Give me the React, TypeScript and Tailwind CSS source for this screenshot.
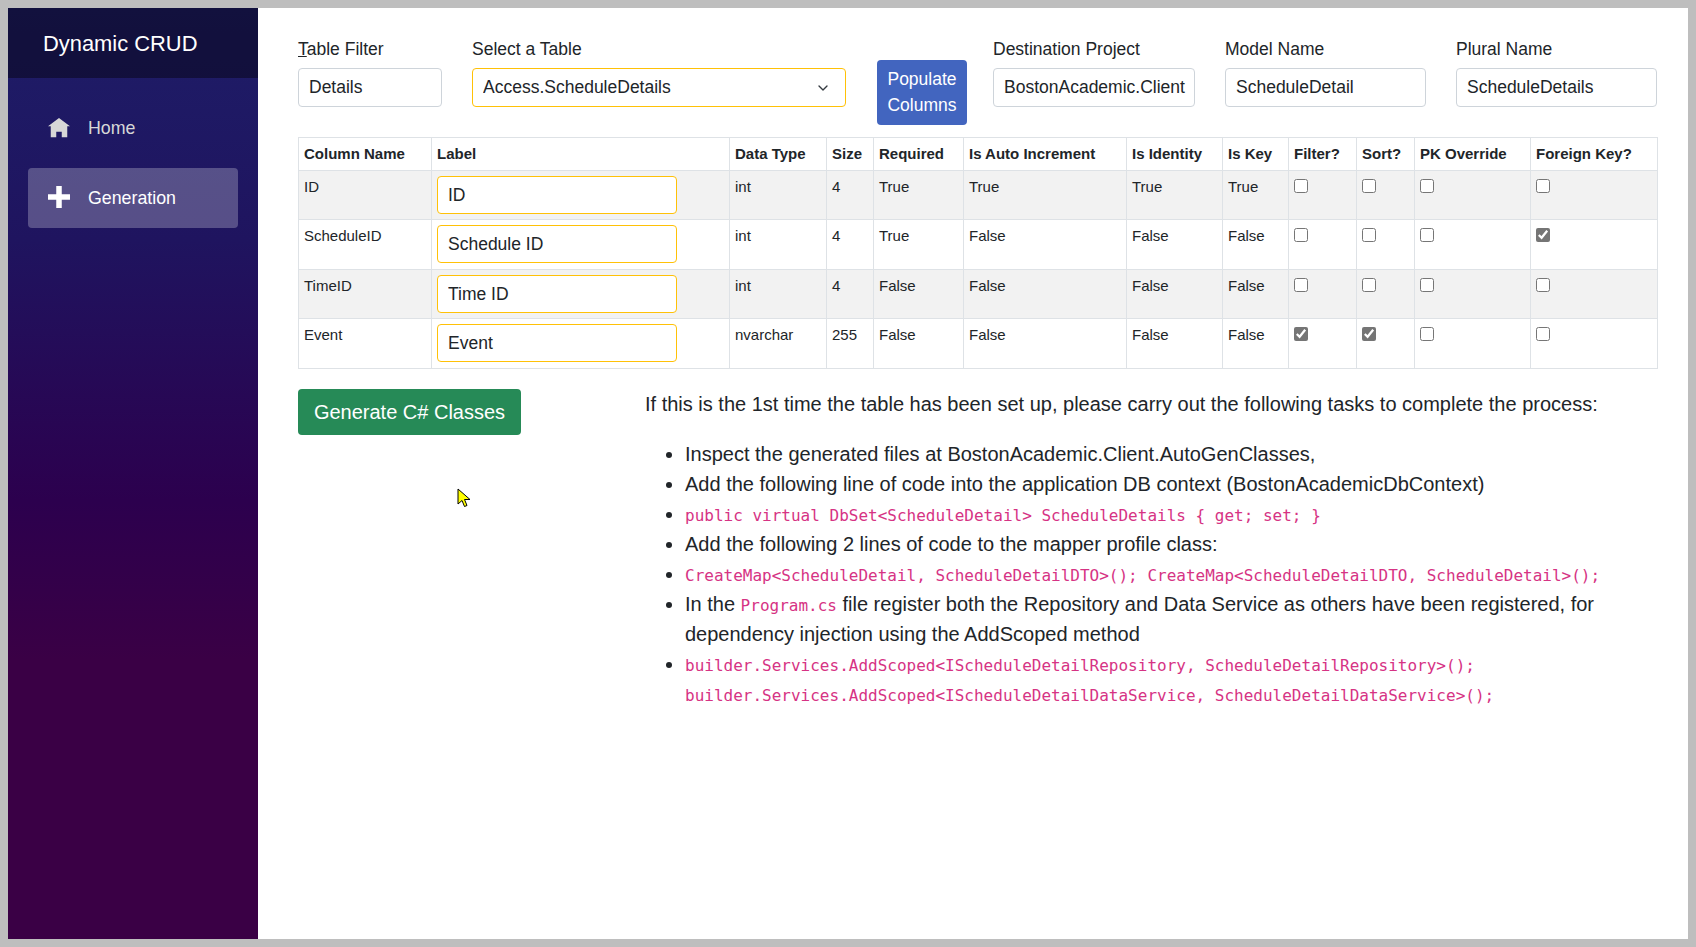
import { ChevronDown } from "lucide-react";

const FONT = "font-['Liberation_Sans',Arial,sans-serif]";
const MONO = "font-['DejaVu_Sans_Mono',monospace]";

const COLUMN_WIDTHS = [133, 298, 97, 47, 90, 163, 96, 66, 68, 58, 116, 127];
const HEADERS = [
  "Column Name",
  "Label",
  "Data Type",
  "Size",
  "Required",
  "Is Auto Increment",
  "Is Identity",
  "Is Key",
  "Filter?",
  "Sort?",
  "PK Override",
  "Foreign Key?",
];

const ROWS = [
  { name: "ID", label: "ID", type: "int", size: "4", required: "True", auto: "True", identity: "True", key: "True", checks: [false, false, false, false] },
  { name: "ScheduleID", label: "Schedule ID", type: "int", size: "4", required: "True", auto: "False", identity: "False", key: "False", checks: [false, false, false, true] },
  { name: "TimeID", label: "Time ID", type: "int", size: "4", required: "False", auto: "False", identity: "False", key: "False", checks: [false, false, false, false] },
  { name: "Event", label: "Event", type: "nvarchar", size: "255", required: "False", auto: "False", identity: "False", key: "False", checks: [true, true, false, false] },
];

function Field({ label, value, className }: { label: string; value: string; className: string }) {
  return (
    <div className={className}>
      <label className="mb-[9px] block h-[20px] text-[17.5px] leading-[20px] text-[#212529]">{label}</label>
      <input
        readOnly
        value={value}
        className="h-[39px] w-full rounded-[4px] border border-[#ced4da] bg-white pl-[10px] pr-[4px] text-[17.5px] text-[#212529] outline-none"
      />
    </div>
  );
}

function Cell({ children }: { children: React.ReactNode }) {
  return <td className="border border-[#dee2e6] px-[5px] pb-[5px] pt-[6px] align-top text-[15px] leading-[20px] text-[#212529]">{children}</td>;
}

function Code({ children }: { children: React.ReactNode }) {
  return <code className={`${MONO} text-[16px] leading-none text-[#d63384]`}>{children}</code>;
}

export default function App() {
  return (
    <div className={`${FONT} relative flex h-[947px] w-[1696px] overflow-hidden bg-[#bebebe] p-2`}>
      <aside className="flex w-[250px] shrink-0 flex-col bg-[linear-gradient(180deg,#1e1d68_0%,#1f145f_25%,#2c004e_53%,#3a0045_70%)]">
        <div className="flex h-[70px] items-center bg-black/40 pl-[35px] pt-[2px] text-[21.9px] text-white">Dynamic CRUD</div>
        <nav className="flex flex-col gap-[10px] px-5 pt-[20px]">
          <a className="flex h-[60px] items-center gap-[18px] rounded-[4px] px-[20px] pt-[1px] text-[17.8px] text-[#d7d7d7]">
            <svg width="22" height="22" viewBox="0 0 8 8" fill="currentColor">
              <path d="M4 0 0 3h1v4h2V5h2v2h2V3.03L8 3 4 0z" />
            </svg>
            Home
          </a>
          <a className="flex h-[60px] items-center gap-[18px] rounded-[4px] bg-white/25 px-[20px] pt-[1px] text-[17.8px] text-white">
            <svg className="-mt-[4px]" width="22" height="22" viewBox="0 0 8 8" fill="currentColor">
              <path d="M3 0v3H0v2h3v3h2V5h3V3H5V0H3z" />
            </svg>
            Generation
          </a>
        </nav>
      </aside>

      <main className="min-w-0 flex-1 bg-white pl-10 pr-[31px] pt-[31px]">
        <div className="flex h-[98px] items-start">
          <div className="w-[144px]">
            <label className="mb-[9px] block h-[20px] text-[17.5px] leading-[20px] text-[#212529]">
              <span className="underline">T</span>able Filter
            </label>
            <input
              readOnly
              value="Details"
              className="h-[39px] w-full rounded-[4px] border border-[#ced4da] bg-white px-[10px] text-[17.5px] text-[#212529] outline-none"
            />
          </div>
          <div className="ml-[30px] w-[374px]">
            <label className="mb-[9px] block h-[20px] text-[17.5px] leading-[20px] text-[#212529]">Select a Table</label>
            <div className="relative">
              <select className="h-[39px] w-full appearance-none rounded-[4px] border border-[#ffc107] bg-white px-[10px] text-[17.5px] text-[#212529] outline-none">
                <option>Access.ScheduleDetails</option>
              </select>
              <ChevronDown className="absolute right-[15px] top-[12px] h-[16px] w-[16px] text-[#343a40]" strokeWidth={2} />
            </div>
          </div>
          <button className="ml-[31px] mt-[21px] h-[65px] w-[90px] rounded-[4px] bg-[#4265bf] pb-[2px] text-[17.5px] leading-[26px] text-white">
            Populate
            <br />
            Columns
          </button>
          <Field label="Destination Project" value="BostonAcademic.Client" className="ml-[26px] w-[202px]" />
          <Field label="Model Name" value="ScheduleDetail" className="ml-[30px] w-[201px]" />
          <Field label="Plural Name" value="ScheduleDetails" className="ml-[30px] w-[201px]" />
        </div>

        <table className="w-[1359px] table-fixed border-collapse border border-[#dee2e6]">
          <colgroup>
            {COLUMN_WIDTHS.map((w, i) => (
              <col key={i} style={{ width: w }} />
            ))}
          </colgroup>
          <thead>
            <tr className="h-[33px]">
              {HEADERS.map((h) => (
                <th key={h} className="border border-[#dee2e6] px-[5px] text-left text-[15px] font-bold leading-[20px] text-[#212529]">
                  {h}
                </th>
              ))}
            </tr>
          </thead>
          <tbody>
            {ROWS.map((row, i) => (
              <tr key={row.name} className={i % 2 === 0 ? "h-[49px] bg-[#f2f2f2]" : "h-[50px] bg-white"}>
                <Cell>{row.name}</Cell>
                <Cell>
                  <input
                    readOnly
                    value={row.label}
                    className="-mt-[1px] block h-[38px] w-[240px] rounded-[4px] border border-[#ffc107] bg-white px-[10px] text-[17.5px] text-[#212529] outline-none"
                  />
                </Cell>
                <Cell>{row.type}</Cell>
                <Cell>{row.size}</Cell>
                <Cell>{row.required}</Cell>
                <Cell>{row.auto}</Cell>
                <Cell>{row.identity}</Cell>
                <Cell>{row.key}</Cell>
                {row.checks.map((checked, j) => (
                  <Cell key={j}>
                    <input type="checkbox" readOnly checked={checked} className="m-0 mt-[2px] block h-[14px] w-[14px] accent-[#757575]" />
                  </Cell>
                ))}
              </tr>
            ))}
          </tbody>
        </table>

        <div className="mt-[20px] flex items-start">
          <button className="h-[46px] w-[223px] rounded-[4px] bg-[#268a57] text-[20px] text-white">Generate C# Classes</button>
          <div className="ml-[124px] flex-1 text-[20px] leading-[30px] text-[#212529]">
            <p>If this is the 1st time the table has been set up, please carry out the following tasks to complete the process:</p>
            <ul className="mt-[20px] list-disc pl-[40px]">
              <li>Inspect the generated files at BostonAcademic.Client.AutoGenClasses,</li>
              <li>Add the following line of code into the application DB context (BostonAcademicDbContext)</li>
              <li>
                <Code>{"public virtual DbSet<ScheduleDetail> ScheduleDetails { get; set; }"}</Code>
              </li>
              <li>Add the following 2 lines of code to the mapper profile class:</li>
              <li>
                <Code>{"CreateMap<ScheduleDetail, ScheduleDetailDTO>(); CreateMap<ScheduleDetailDTO, ScheduleDetail>();"}</Code>
              </li>
              <li>
                In the <Code>Program.cs</Code> file register both the Repository and Data Service as others have been registered, for dependency injection using the AddScoped method
              </li>
              <li>
                <Code>{"builder.Services.AddScoped<IScheduleDetailRepository, ScheduleDetailRepository>();"}</Code>
                <br />
                <Code>{"builder.Services.AddScoped<IScheduleDetailDataService, ScheduleDetailDataService>();"}</Code>
              </li>
            </ul>
          </div>
        </div>
      </main>

      {/* mouse pointer left in the capture */}
      <svg className="absolute left-[457px] top-[488px]" width="14" height="21" viewBox="0 0 14 21">
        <path d="M1 1v15l4-3.5 2.5 6 2.5-1-2.5-6H13L1 1z" fill="#ffff00" stroke="#000" strokeWidth="1" />
      </svg>
    </div>
  );
}
